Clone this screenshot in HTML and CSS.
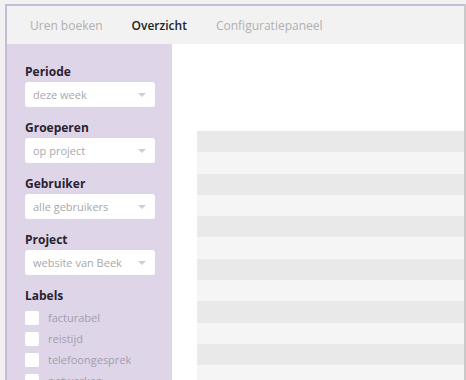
FILE: index.html
```html
<!DOCTYPE html>
<html lang="nl">
<head>
  <meta charset="UTF-8">
  <meta name="viewport" content="width=device-width, initial-scale=1.0">
  <title>Overzicht</title>
  <link rel="stylesheet" href="styles.css">
</head>
<body>
  <div class="frame">
    <nav class="tabs">
      <a class="tab">Uren boeken</a>
      <a class="tab active">Overzicht</a>
      <a class="tab">Configuratiepaneel</a>
    </nav>

    <div class="container">
      <aside class="filters">
        <div class="filter-section">
          <h4>Periode</h4>
          <div class="select">deze week<span class="arrow"></span></div>
        </div>
        <div class="filter-section">
          <h4>Groeperen</h4>
          <div class="select">op project<span class="arrow"></span></div>
        </div>
        <div class="filter-section">
          <h4>Gebruiker</h4>
          <div class="select">alle gebruikers<span class="arrow"></span></div>
        </div>
        <div class="filter-section">
          <h4>Project</h4>
          <div class="select">website van Beek<span class="arrow"></span></div>
        </div>
        <div class="filter-section">
          <h4>Labels</h4>
          <label class="check"><span class="box"></span>facturabel</label>
          <label class="check"><span class="box"></span>reistijd</label>
          <label class="check"><span class="box"></span>telefoongesprek</label>
          <label class="check"><span class="box"></span>netwerken</label>
        </div>
      </aside>

      <section class="overview">
        <div class="rows">
          <div class="row"></div>
          <div class="row"></div>
          <div class="row"></div>
          <div class="row"></div>
          <div class="row"></div>
          <div class="row"></div>
          <div class="row"></div>
          <div class="row"></div>
          <div class="row"></div>
          <div class="row"></div>
          <div class="row"></div>
          <div class="row"></div>
        </div>
      </section>
    </div>
  </div>
</body>
</html>
```

FILE: styles.css
```css
body {
  font-family: "Open Sans", Arial, sans-serif;
  margin: 0;
  padding: 0;
  background-color: #f1f1f1;
  height: 380px;
  overflow: hidden;
}
.frame {
  margin: 4px 0 0 5px;
  height: 376px;
  border-left: 2px solid #c6bbd8;
  border-top: 2px solid #c6bbd8;
  border-right: 2px solid #c9c9c9;
  background-color: #fff;
  display: flex;
  flex-direction: column;
  overflow: hidden;
}
.tabs {
  flex-shrink: 0;
  height: 38px;
  display: flex;
  align-items: center;
  gap: 29px;
  padding-left: 23px;
  background-color: #f2f2f2;
  font-size: 12px;
}
.tab {
  color: #b0b0b0;
}
.tab.active {
  color: #222;
  font-weight: 600;
}
.container {
  display: flex;
  flex: 1;
  min-height: 0;
}
.filters {
  flex-shrink: 0;
  width: 147px;
  padding: 20px 0 0 18px;
  background-color: #ded6e8;
}
.filter-section {
  margin-bottom: 13px;
}
.filter-section h4 {
  margin: 0 0 2px;
  font-size: 12px;
  font-weight: bold;
  line-height: 16px;
  color: #2a2230;
}
.select {
  position: relative;
  width: 122px;
  height: 25px;
  line-height: 25px;
  padding-left: 8px;
  border-radius: 3px;
  background-color: #fff;
  font-size: 11px;
  color: #a8a8a8;
}
.arrow {
  position: absolute;
  right: 9px;
  top: 11px;
  border-left: 4px solid transparent;
  border-right: 4px solid transparent;
  border-top: 4px solid #cfcfcf;
}
.check {
  display: flex;
  align-items: center;
  height: 21px;
  font-size: 11px;
  color: #a39cad;
}
.filter-section h4 + .check {
  margin-top: 3px;
}
.box {
  width: 14px;
  height: 14px;
  margin-right: 9px;
  border-radius: 2px;
  background-color: #fff;
}
.overview {
  flex: 1;
  padding: 87px 0 0 25px;
}
.row {
  height: 21.3px;
  background-color: #f5f5f5;
}
.row:nth-child(odd) {
  background-color: #e9e9e9;
}
```
